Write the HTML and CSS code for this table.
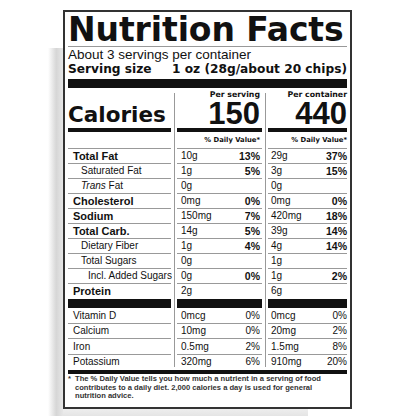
FILE: index.html
```html
<!DOCTYPE html>
<html lang="en">
<head>
  <meta charset="UTF-8">
  <meta name="viewport" content="width=device-width, initial-scale=1">
  <title>Nutrition Facts</title>
  <link rel="stylesheet" href="styles.css">
</head>
<body>
  <div class="page">
    <div class="label">
      <!-- Header -->
      <h1 class="title">Nutrition Facts</h1>
      <p class="servings">About 3 servings per container</p>
      <p class="size"><span>Serving size</span><span>1 oz (28g/about 20 chips)</span></p>
      <div class="bar"></div>

      <!-- Facts table -->
      <div class="facts">
        <div class="row head">
          <div></div>
          <div>Per serving</div>
          <div>Per container</div>
        </div>
        <div class="row cal">
          <div>Calories</div>
          <div>150</div>
          <div>440</div>
        </div>
        <div class="row dv">
          <div></div>
          <div>% Daily Value*</div>
          <div>% Daily Value*</div>
        </div>

        <div class="row">
          <div class="main">Total Fat</div>
          <div><span>10g</span><b>13%</b></div>
          <div><span>29g</span><b>37%</b></div>
        </div>
        <div class="row">
          <div class="sub">Saturated Fat</div>
          <div><span>1g</span><b>5%</b></div>
          <div><span>3g</span><b>15%</b></div>
        </div>
        <div class="row">
          <div class="sub"><span><i>Trans</i> Fat</span></div>
          <div><span>0g</span></div>
          <div><span>0g</span></div>
        </div>
        <div class="row">
          <div class="main">Cholesterol</div>
          <div><span>0mg</span><b>0%</b></div>
          <div><span>0mg</span><b>0%</b></div>
        </div>
        <div class="row">
          <div class="main">Sodium</div>
          <div><span>150mg</span><b>7%</b></div>
          <div><span>420mg</span><b>18%</b></div>
        </div>
        <div class="row">
          <div class="main">Total Carb.</div>
          <div><span>14g</span><b>5%</b></div>
          <div><span>39g</span><b>14%</b></div>
        </div>
        <div class="row">
          <div class="sub">Dietary Fiber</div>
          <div><span>1g</span><b>4%</b></div>
          <div><span>4g</span><b>14%</b></div>
        </div>
        <div class="row">
          <div class="sub">Total Sugars</div>
          <div><span>0g</span></div>
          <div><span>1g</span></div>
        </div>
        <div class="row">
          <div class="subsub">Incl. Added Sugars</div>
          <div><span>0g</span><b>0%</b></div>
          <div><span>1g</span><b>2%</b></div>
        </div>
        <div class="row last">
          <div class="main">Protein</div>
          <div><span>2g</span></div>
          <div><span>6g</span></div>
        </div>
        <div class="row split">
          <div></div>
          <div></div>
          <div></div>
        </div>

        <div class="row tall">
          <div class="main light">Vitamin D</div>
          <div><span>0mcg</span><span>0%</span></div>
          <div><span>0mcg</span><span>0%</span></div>
        </div>
        <div class="row">
          <div class="main light">Calcium</div>
          <div><span>10mg</span><span>0%</span></div>
          <div><span>20mg</span><span>2%</span></div>
        </div>
        <div class="row tall">
          <div class="main light">Iron</div>
          <div><span>0.5mg</span><span>2%</span></div>
          <div><span>1.5mg</span><span>8%</span></div>
        </div>
        <div class="row last">
          <div class="main light">Potassium</div>
          <div><span>320mg</span><span>6%</span></div>
          <div><span>910mg</span><span>20%</span></div>
        </div>
      </div>
      <div class="bar-thin"></div>

      <!-- Footnote -->
      <p class="note">
        <span class="star">*</span>
        <span>The % Daily Value tells you how much a nutrient in a serving of food<br>contributes to a daily diet. 2,000 calories a day is used for general<br>nutrition advice.</span>
      </p>
    </div>
  </div>
</body>
</html>
```

FILE: styles.css
```css
/* Reset */
* {
  margin: 0;
  padding: 0;
  box-sizing: border-box;
}
body {
  background:
    linear-gradient(to right, #fff, #d6d6d6 55%, #e6e6e6) 48px 48px / 15px 100% no-repeat,
    linear-gradient(#eee, #e4e4e4) 48px 409px / 260px 7px no-repeat,
    #fff;
  color: #111;
  font-family: "Liberation Sans", Arial, sans-serif;
  overflow: hidden;
  height: 416px;
}
.page {
  padding: 10px 0 0 63px;
}
/* Label box */
.label {
  width: 289px;
  border: 2px solid #333;
  padding: 0 3px 6px;
  background-color: #fff;
}
.title {
  font-family: "DejaVu Sans", sans-serif;
  font-weight: bold;
  font-size: 33px;
  line-height: 30px;
  margin-top: 3px;
  padding-bottom: 1px;
  white-space: nowrap;
  letter-spacing: -0.1px;
  border-bottom: 1px solid #999;
}
.servings {
  font-size: 13.5px;
  line-height: 14px;
  margin-top: 1px;
}
.size {
  display: flex;
  justify-content: space-between;
  font-family: "DejaVu Sans", sans-serif;
  font-weight: bold;
  font-size: 12.2px;
  line-height: 13px;
  margin-top: 1px;
  white-space: nowrap;
}
.bar {
  height: 9px;
  margin-top: 3px;
  background-color: #111;
}
.bar-thin {
  height: 4px;
  background-color: #111;
}
/* Facts table: three columns with grey dividers in the gaps */
.facts {
  background:
    linear-gradient(#999, #999) 106px 5px / 1px calc(100% - 8px) no-repeat,
    linear-gradient(#999, #999) 197px 5px / 1px calc(100% - 8px) no-repeat;
}
.row {
  display: grid;
  grid-template-columns: 103px 85px 79px;
  column-gap: 6px;
}
.row > div {
  height: 15px;
  line-height: 14px;
  font-size: 10px;
  border-bottom: 1px solid #999;
  display: flex;
  justify-content: space-between;
  white-space: nowrap;
}
.row > div:nth-child(2) {
  padding: 0 2px 0 4px;
}
.row > div:nth-child(3) {
  padding-left: 3px;
}
.row b {
  font-size: 10.5px;
}
.row .main {
  font-weight: bold;
  font-size: 11px;
  padding-left: 5px;
}
.row .main.light {
  font-weight: normal;
  font-size: 10px;
}
.row .sub {
  padding-left: 13px;
}
.row .subsub {
  padding-left: 20px;
}
.row.tall > div {
  height: 16px;
  line-height: 15px;
}
.row.last > div {
  border-bottom: none;
}
/* Header rows */
.row.head > div {
  height: 11px;
  padding-top: 2px;
  line-height: 10px;
  border-bottom: none;
  justify-content: flex-end;
  font-family: "DejaVu Sans", sans-serif;
  font-weight: bold;
  font-size: 7.8px;
}
.row.cal > div {
  height: 33px;
  border-bottom: 4px solid #111;
  justify-content: flex-end;
  font-weight: bold;
  font-size: 31px;
  line-height: 30px;
}
.row.cal > div:first-child {
  justify-content: flex-start;
  font-family: "DejaVu Sans", sans-serif;
  font-size: 21.5px;
  line-height: 26px;
  padding-top: 3px;
}
.row.dv > div {
  height: 17px;
  line-height: 16px;
  justify-content: flex-end;
  font-family: "DejaVu Sans", sans-serif;
  font-weight: bold;
  font-size: 6.8px;
}
.row.split > div {
  height: 9px;
  border-bottom: none;
  background-color: #111;
}
/* Footnote */
.note {
  display: flex;
  font-weight: bold;
  font-size: 7.6px;
  line-height: 8.5px;
  color: #333;
  padding-top: 1px;
}
.note .star {
  width: 7px;
}
```
